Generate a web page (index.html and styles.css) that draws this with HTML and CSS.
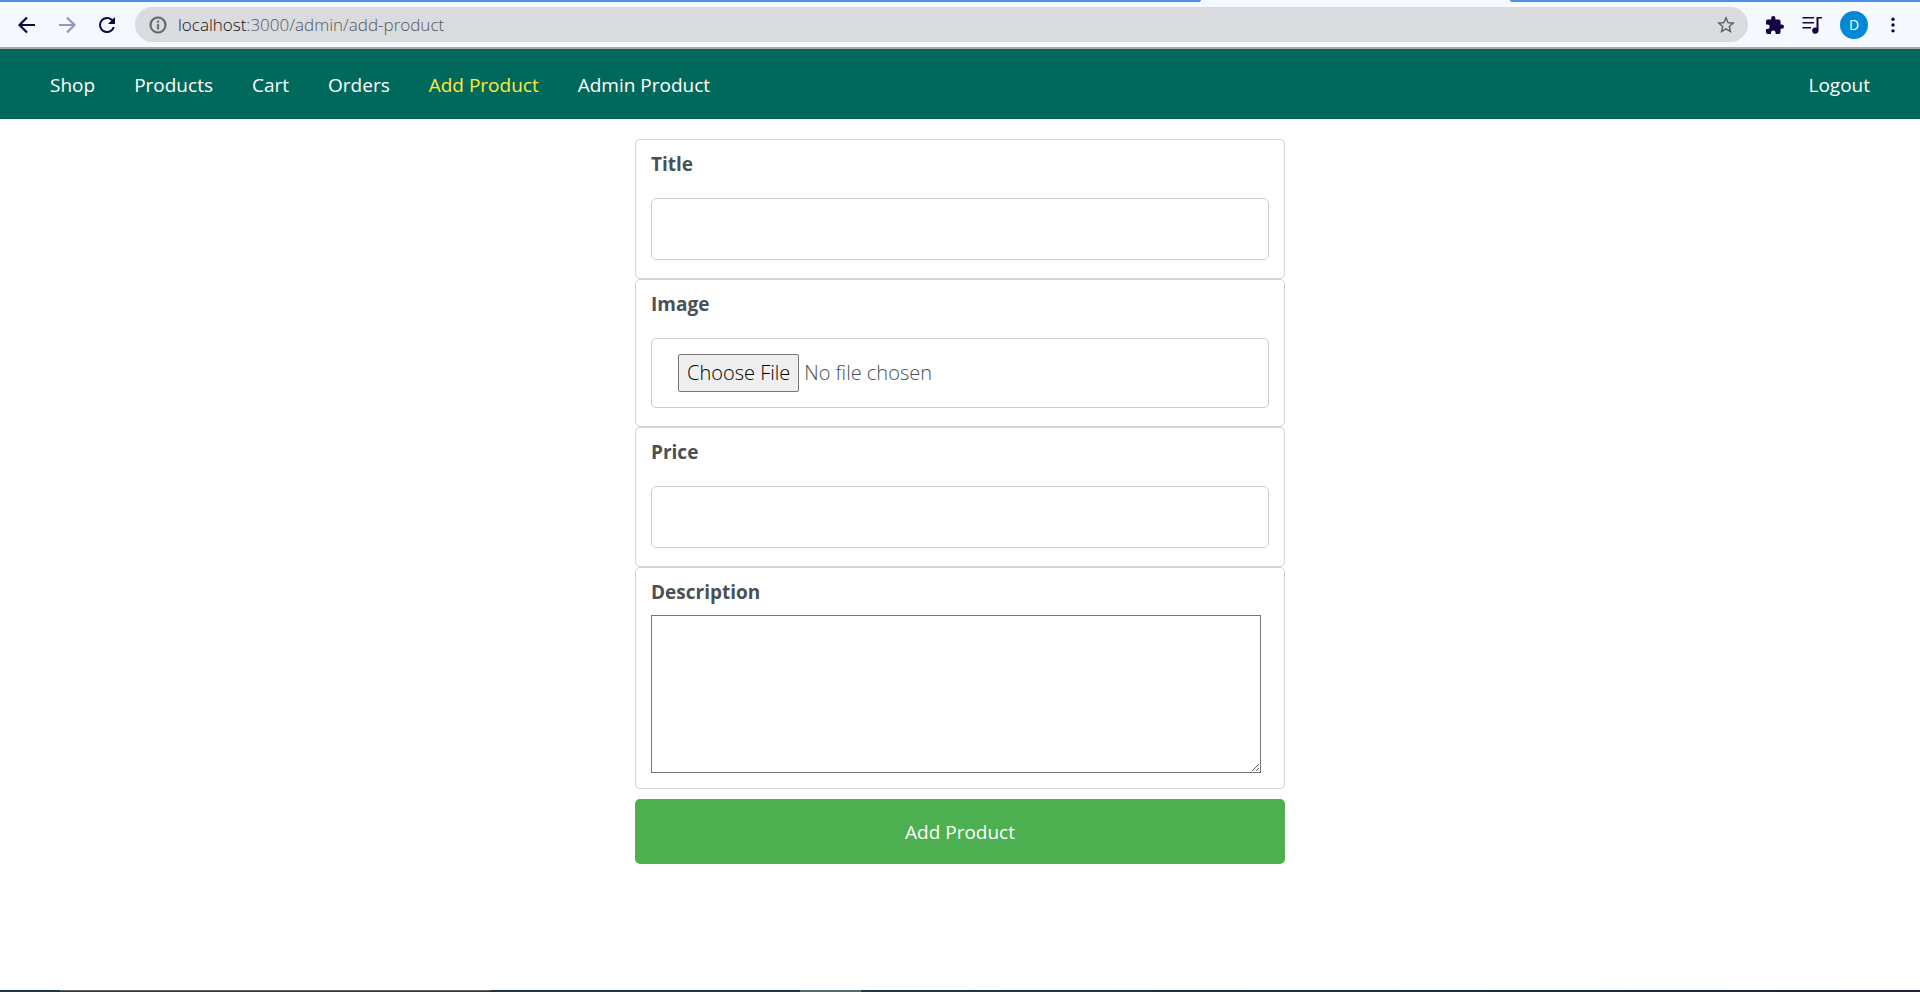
FILE: index.html
```html
<!DOCTYPE html>
<html lang="en">
<head>
<meta charset="utf-8">
<title>Add Product</title>
<link rel="stylesheet" href="styles.css">
</head>
<body>
<div class="browser">
  <div class="tabstrip"><span class="tabs-left"></span><span class="tab-active"></span><span class="tabs-right"></span></div>
  <div class="toolbar">
    <button class="tool" type="button" aria-label="Back"><svg viewBox="0 0 24 24"><path d="M20 12H5M12 4.500L4.500 12l7.500 7.500" fill="none" stroke="currentColor" stroke-width="2.200"/></svg></button>
    <button class="tool tool-muted" type="button" aria-label="Forward"><svg viewBox="0 0 24 24"><path d="M4 12h15M12 4.500l7.500 7.500-7.500 7.500" fill="none" stroke="currentColor" stroke-width="2.200"/></svg></button>
    <button class="tool" type="button" aria-label="Reload"><svg viewBox="0 0 24 24"><path d="M17.650 6.350A7.960 7.960 0 0 0 12 4a8 8 0 1 0 7.730 10h-2.080A6 6 0 1 1 12 6c1.660 0 3.140.69 4.220 1.780L13 11h7V4z" fill="currentColor"/></svg></button>
    <div class="address">
      <svg class="info" viewBox="0 0 24 24"><path d="M11 7h2v2h-2zm0 4h2v6h-2zm1-9a10 10 0 1 0 0 20 10 10 0 0 0 0-20zm0 18a8 8 0 1 1 0-16 8 8 0 0 1 0 16z" fill="currentColor" stroke="currentColor" stroke-width=".5"/></svg>
      <span class="url"><span class="host">localhost</span>:3000/admin/add-product</span>
      <button class="star" type="button" aria-label="Bookmark this page"><svg viewBox="2 2 20 20"><path d="M22 9.240l-7.190-.62L12 2 9.190 8.630 2 9.240l5.460 4.730L5.820 21 12 17.270 18.180 21l-1.630-7.030zM12 15.400l-3.760 2.270 1-4.280-3.320-2.880 4.380-.38L12 6.100l1.710 4.040 4.380.38-3.320 2.880 1 4.280z" fill="currentColor"/></svg></button>
    </div>
    <div class="actions">
      <button class="tool" type="button" aria-label="Extensions"><svg viewBox="2 1 21 21"><path d="M20.500 11H19V7a2 2 0 0 0-2-2h-4V3.500a2.500 2.500 0 0 0-5 0V5H4a2 2 0 0 0-2 2v3.800h1.500a2.700 2.700 0 0 1 0 5.400H2V20a2 2 0 0 0 2 2h3.800v-1.500a2.700 2.700 0 0 1 5.400 0V22H17a2 2 0 0 0 2-2v-4h1.500a2.500 2.500 0 0 0 0-5z" fill="currentColor"/></svg></button>
      <button class="tool tool-wide" type="button" aria-label="Media"><svg viewBox="0 0 24 24"><path d="M14 4H2.500v1.600H14zm0 5H2.500v1.600H14zM2.500 15.600H11V14H2.500zM16.500 4v10.700a3.200 3.200 0 1 0 2 3V5.600H22V4z" fill="currentColor"/></svg></button>
      <button class="avatar" type="button" aria-label="Profile">D</button>
      <button class="tool" type="button" aria-label="Menu"><svg viewBox="0 0 24 24"><g fill="currentColor"><circle cx="12" cy="4.200" r="2.300"/><circle cx="12" cy="12" r="2.300"/><circle cx="12" cy="19.800" r="2.300"/></g></svg></button>
    </div>
  </div>
</div>
<header class="site-header">
  <nav class="nav">
    <a href="#">Shop</a>
    <a href="#">Products</a>
    <a href="#">Cart</a>
    <a href="#">Orders</a>
    <a class="active" href="#">Add Product</a>
    <a href="#">Admin Product</a>
  </nav>
  <nav class="nav"><a href="#">Logout</a></nav>
</header>
<main class="main">
  <form class="form">
    <div class="field">
      <label for="title">Title</label>
      <input class="control" id="title" type="text">
    </div>
    <div class="field">
      <label for="image">Image</label>
      <input class="control file" id="image" type="file">
    </div>
    <div class="field">
      <label for="price">Price</label>
      <input class="control" id="price" type="text">
    </div>
    <div class="field">
      <label for="description">Description</label>
      <textarea class="area" id="description"></textarea>
    </div>
    <button class="submit" type="submit">Add Product</button>
  </form>
</main>
<footer class="taskbar"><span class="search"></span><span class="pinned"></span><span class="running"></span><span class="tray"></span></footer>
</body>
</html>
```
FILE: styles.css
```css
* { box-sizing: border-box; }
body {
  margin: 0;
  min-height: 100vh;
  display: flex;
  flex-direction: column;
  background: #fff;
  color: #495057;
  font: 20px/30px "Open Sans", "Noto Sans", sans-serif;
}
button { font: inherit; cursor: pointer; }
.browser { background: #f5f9ff; border-bottom: 2px solid #a9abae; }
.tabstrip { display: flex; height: 2px; }
.tabs-left { flex: 1201; background: #4990e8; border-bottom-right-radius: 2px; }
.tab-active { flex: 309; }
.tabs-right { flex: 410; background: #4990e8; border-bottom-left-radius: 2px; }
.toolbar {
  display: flex;
  align-items: center;
  gap: 16px;
  height: 45px;
  padding: 0 18px 0 15px;
}
.tool, .star, .avatar { border: 0; padding: 0; background: none; flex: none; }
.tool { width: 24px; height: 24px; color: #140644; }
.tool svg, .star svg, .info { display: block; width: 100%; height: 100%; }
.tool-muted { color: #9b93b8; }
.address {
  flex: 1;
  display: flex;
  align-items: center;
  height: 35px;
  padding: 0 13px;
  border-radius: 18px;
  background: #dadbdf;
  color: #5f6368;
}
.address .info { width: 20px; height: 20px; flex: none; }
.url { flex: 1; padding-left: 10px; font-size: 17px; line-height: 24px; font-weight: 300; color: #54575b; }
.host { color: #111; }
.star { width: 18px; height: 18px; color: #5f6368; }
.actions { display: flex; align-items: center; gap: 16px; padding-left: 2px; }
.actions .tool { width: 18px; height: 18px; }
.actions .tool-wide { width: 24px; height: 24px; }
.actions .avatar {
  width: 28px;
  height: 28px;
  border-radius: 50%;
  background: #0288d6;
  color: #fff;
  font-size: 14px;
  line-height: 28px;
}
.site-header {
  display: flex;
  justify-content: space-between;
  align-items: center;
  height: 70px;
  padding: 2px 50px 0;
  background: #00695c;
}
.nav { display: flex; gap: 39px; }
.nav a { color: #fff; font-size: 19px; line-height: 30px; text-decoration: none; }
.nav a.active { color: #ffeb3b; }
.main { flex: 1; padding: 20px; }
.form { max-width: 650px; margin: 0 auto; }
.field {
  padding: 9px 15px 18px;
  border: 1px solid #ced4da;
  border-radius: 5px;
}
.field:last-of-type { padding-bottom: 15px; }
.field label { display: block; font-size: 19px; line-height: 31px; font-weight: 700; }
.control {
  display: block;
  width: 100%;
  height: 62px;
  margin-top: 18px;
  padding: 15px 26px;
  border: 1px solid #ccc;
  border-radius: 5px;
  background: #fff;
  color: #495057;
  font: 20px/30px "Open Sans", "Noto Sans", sans-serif;
}
.file { height: 70px; font-weight: 300; }
.file::file-selector-button {
  height: 38px;
  margin: 0 5px 0 0;
  padding: 0 8px;
  border: 1px solid #767676;
  border-radius: 2px;
  background: #efefef;
  color: #000;
  font: inherit;
}
.area {
  display: block;
  width: calc(100% - 8px);
  height: 158px;
  margin-top: 7px;
  border: 1px solid #767676;
  border-radius: 0;
  background: #fff;
  font: inherit;
}
.submit {
  display: block;
  width: 100%;
  height: 65px;
  margin-top: 10px;
  border: 0;
  border-radius: 5px;
  background: #4caf50;
  color: #fff;
  font-size: 19px;
}
.taskbar { display: flex; height: 2px; background: #1e3643; }
.search { flex: 430; margin-left: 60px; background: #3b3234; border-top: 1px solid #625d5c; }
.pinned { flex: 310; }
.running { flex: 61; background: #566b72; }
.tray { flex: 1059; background: linear-gradient(90deg, #1e3a45, #1c2340); }
```
